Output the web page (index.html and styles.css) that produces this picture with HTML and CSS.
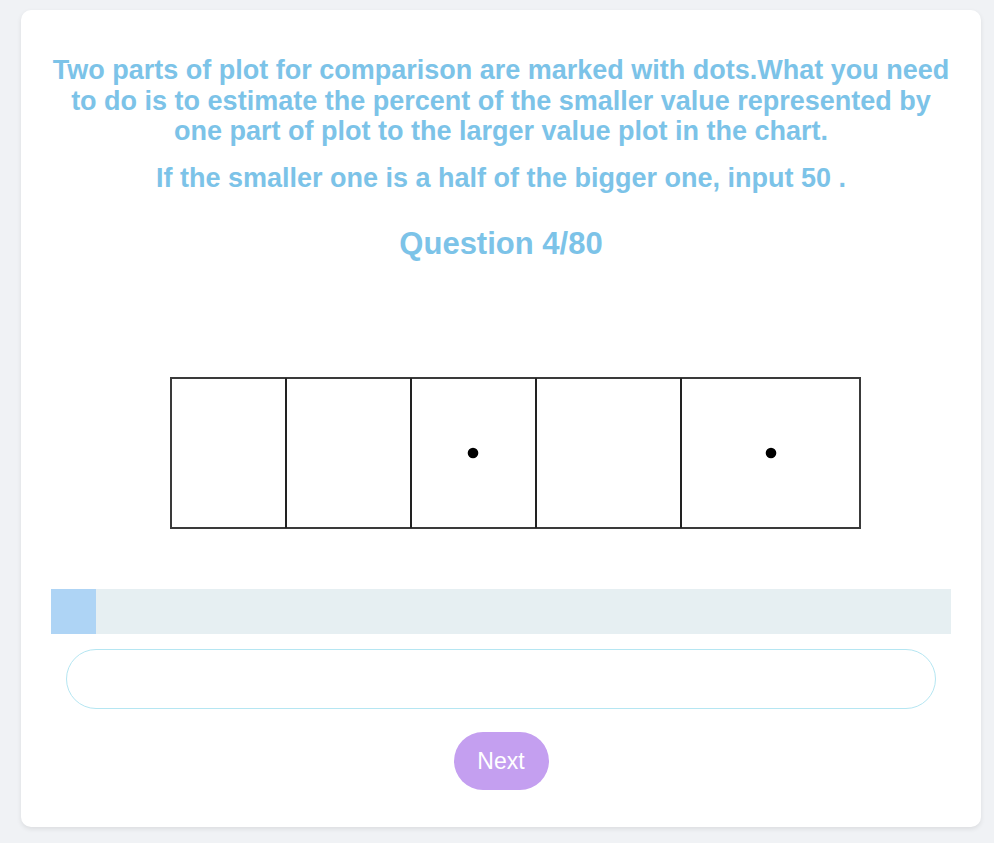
FILE: index.html
```html
<!DOCTYPE html>
<html>
<head>
<meta charset="utf-8">
<link rel="stylesheet" href="styles.css">
</head>
<body>
<div class="card">
  <p class="instr">Two parts of plot for comparison are marked with dots.What you need to do is to estimate the percent of the smaller value represented by one part of plot to the larger value plot in the chart.</p>
  <p class="hint">If the smaller one is a half of the bigger one, input 50 .</p>
  <h2 class="question">Question 4/80</h2>
  <svg class="chart" width="700" height="160" viewBox="165 372 700 160">
    <rect x="171" y="378" width="689" height="150" fill="#fff" stroke="#3a3a3a" stroke-width="2"/>
    <line x1="286" y1="378" x2="286" y2="528" stroke="#222" stroke-width="2"/>
    <line x1="411" y1="378" x2="411" y2="528" stroke="#222" stroke-width="2"/>
    <line x1="536" y1="378" x2="536" y2="528" stroke="#222" stroke-width="2"/>
    <line x1="681" y1="378" x2="681" y2="528" stroke="#222" stroke-width="2"/>
    <circle cx="473" cy="453" r="5.3" fill="#000"/>
    <circle cx="771" cy="453" r="5.3" fill="#000"/>
  </svg>
  <div class="progress"><div class="fill" style="width:5%"></div></div>
  <input class="answer" type="text">
  <button class="next">Next</button>
</div>
</body>
</html>
```
FILE: styles.css
```css
html, body {
  margin: 0;
  padding: 0;
  background: #f0f2f5;
}
body {
  font-family: 'Liberation Sans', Arial, sans-serif;
  padding: 10px 0 16px 21px;
}
.card {
  width: 960px;
  height: 817px;
  box-sizing: border-box;
  background: #fff;
  border-radius: 10px;
  box-shadow: 0 2px 5px rgba(0, 0, 0, 0.09);
  display: flex;
  flex-direction: column;
  align-items: center;
  padding: 45px 30px 0;
}
.instr, .hint {
  margin: 0;
  color: #7cc3e8;
  font-weight: bold;
  font-size: 27px;
  line-height: 30.5px;
  text-align: center;
}
.instr {
  width: 900px;
}
.hint {
  margin-top: 16px;
}
.question {
  margin: 34px 0 0;
  color: #7cc3e8;
  font-size: 31px;
  line-height: 34px;
  font-weight: bold;
}
.chart {
  display: block;
  align-self: flex-start;
  margin: 111px 0 0 114px;
}
.progress {
  margin-top: 57px;
  width: 900px;
  height: 45px;
  background: #e6eff2;
}
.fill {
  height: 100%;
  background: #aed4f5;
}
.answer {
  display: block;
  margin-top: 15px;
  width: 870px;
  height: 60px;
  box-sizing: border-box;
  border: 1px solid #b5e6f2;
  border-radius: 30px;
  outline: none;
  background: #fff;
  font-family: 'Liberation Sans', Arial, sans-serif;
  font-size: 20px;
  padding: 0 20px;
}
.next {
  margin-top: 23px;
  width: 95px;
  height: 58px;
  border: none;
  border-radius: 29px;
  background: #c49ff0;
  color: #fff;
  font-family: 'Liberation Sans', Arial, sans-serif;
  font-size: 23px;
  padding: 0;
}
```
